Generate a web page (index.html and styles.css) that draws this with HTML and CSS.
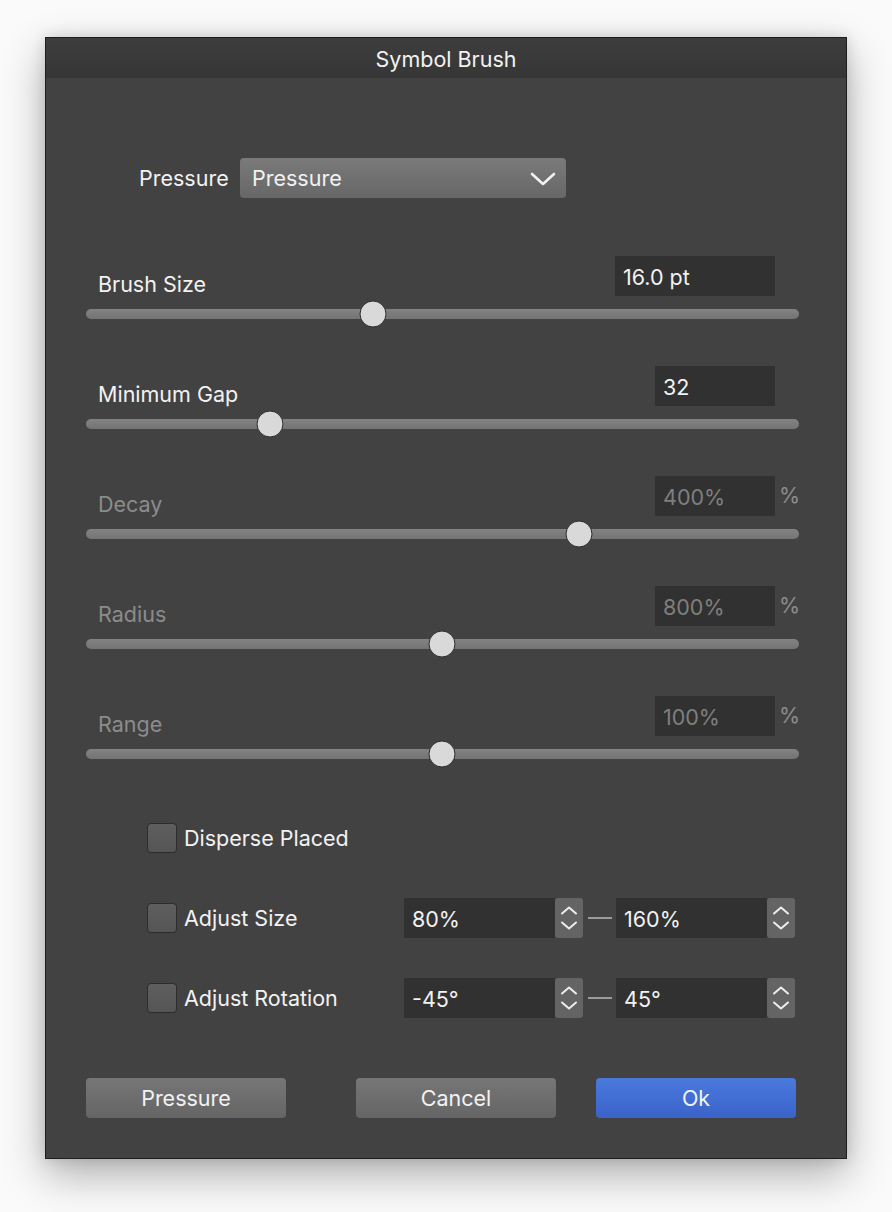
FILE: index.html
```html
<!DOCTYPE html>
<html lang="en">
<head>
    <meta charset="UTF-8">
    <title>Symbol Brush</title>
    <link rel="stylesheet" href="styles.css">
</head>
<body>
    <div class="dialog">
        <div class="titlebar">Symbol Brush</div>
        <div class="content">
            <div class="mode-row">
                <span class="mode-label">Pressure</span>
                <div class="select">
                    <span>Pressure</span>
                    <svg class="chevron" width="26" height="16" viewBox="0 0 26 16"><path d="M2 3 L13 13 L24 3" fill="none" stroke="#f2f2f2" stroke-width="2.6" stroke-linecap="round" stroke-linejoin="round"/></svg>
                </div>
            </div>

            <div class="slider-group">
                <div class="slider-head">
                    <span class="slider-label">Brush Size</span>
                    <div class="value-box wide">16.0 pt</div>
                    <span class="unit"></span>
                </div>
                <div class="track"><div class="knob" style="left: 40.3%"></div></div>
            </div>

            <div class="slider-group">
                <div class="slider-head">
                    <span class="slider-label">Minimum Gap</span>
                    <div class="value-box">32</div>
                    <span class="unit"></span>
                </div>
                <div class="track"><div class="knob" style="left: 25.8%"></div></div>
            </div>

            <div class="slider-group disabled">
                <div class="slider-head">
                    <span class="slider-label">Decay</span>
                    <div class="value-box">400%</div>
                    <span class="unit">%</span>
                </div>
                <div class="track"><div class="knob" style="left: 69.1%"></div></div>
            </div>

            <div class="slider-group disabled">
                <div class="slider-head">
                    <span class="slider-label">Radius</span>
                    <div class="value-box">800%</div>
                    <span class="unit">%</span>
                </div>
                <div class="track"><div class="knob" style="left: 49.9%"></div></div>
            </div>

            <div class="slider-group disabled">
                <div class="slider-head">
                    <span class="slider-label">Range</span>
                    <div class="value-box">100%</div>
                    <span class="unit">%</span>
                </div>
                <div class="track"><div class="knob" style="left: 49.9%"></div></div>
            </div>

            <div class="options">
                <div class="option-row">
                    <div class="checkbox"></div>
                    <span class="option-label">Disperse Placed</span>
                </div>
                <div class="option-row">
                    <div class="checkbox"></div>
                    <span class="option-label">Adjust Size</span>
                    <div class="field">80%</div>
                    <div class="stepper">
                        <svg width="18" height="26" viewBox="0 0 18 26"><path d="M2 8.5 L9 2.5 L16 8.5 M2 17.5 L9 23.5 L16 17.5" fill="none" stroke="#eeeeee" stroke-width="2" stroke-linecap="round" stroke-linejoin="round"/></svg>
                    </div>
                    <div class="dash"></div>
                    <div class="field">160%</div>
                    <div class="stepper">
                        <svg width="18" height="26" viewBox="0 0 18 26"><path d="M2 8.5 L9 2.5 L16 8.5 M2 17.5 L9 23.5 L16 17.5" fill="none" stroke="#eeeeee" stroke-width="2" stroke-linecap="round" stroke-linejoin="round"/></svg>
                    </div>
                </div>
                <div class="option-row">
                    <div class="checkbox"></div>
                    <span class="option-label">Adjust Rotation</span>
                    <div class="field">-45°</div>
                    <div class="stepper">
                        <svg width="18" height="26" viewBox="0 0 18 26"><path d="M2 8.5 L9 2.5 L16 8.5 M2 17.5 L9 23.5 L16 17.5" fill="none" stroke="#eeeeee" stroke-width="2" stroke-linecap="round" stroke-linejoin="round"/></svg>
                    </div>
                    <div class="dash"></div>
                    <div class="field">45°</div>
                    <div class="stepper">
                        <svg width="18" height="26" viewBox="0 0 18 26"><path d="M2 8.5 L9 2.5 L16 8.5 M2 17.5 L9 23.5 L16 17.5" fill="none" stroke="#eeeeee" stroke-width="2" stroke-linecap="round" stroke-linejoin="round"/></svg>
                    </div>
                </div>
            </div>

            <div class="buttons">
                <button class="btn">Pressure</button>
                <button class="btn cancel-btn">Cancel</button>
                <button class="btn ok-btn">Ok</button>
            </div>
        </div>
    </div>
</body>
</html>
```

FILE: styles.css
```css
html {
    background-color: #fafafa;
}
body {
    margin: 0;
    padding: 37px 0 54px 45px;
    font-family: Inter, "Open Sans", sans-serif;
    font-size: 21.5px;
    color: #f2f2f2;
}
.dialog {
    box-sizing: border-box;
    width: 802px;
    background-color: #424242;
    border: 1px solid #1e1e1e;
    box-shadow: 0 16px 40px rgba(0, 0, 0, 0.3), 0 0 14px rgba(0, 0, 0, 0.14);
}
.titlebar {
    height: 40px;
    line-height: 42px;
    text-align: center;
    background: linear-gradient(#3d3d3d, #363636);
}
.content {
    padding: 80px 47px 40px 40px;
}
.mode-row {
    display: flex;
    align-items: center;
    padding-left: 53px;
}
.mode-label {
    width: 101px;
}
.select {
    width: 326px;
    height: 40px;
    box-sizing: border-box;
    padding: 0 10px 0 12px;
    display: flex;
    align-items: center;
    justify-content: space-between;
    border-radius: 4px;
    background: linear-gradient(#7a7a7a, #676767);
}
.chevron {
    margin-top: 1px;
}
.slider-group {
    margin-top: 47px;
}
.mode-row + .slider-group {
    margin-top: 58px;
}
.slider-head {
    display: flex;
    align-items: flex-end;
    padding-left: 12px;
}
.slider-label {
    flex: 1;
    line-height: 24px;
}
.value-box {
    box-sizing: border-box;
    width: 120px;
    height: 40px;
    line-height: 42px;
    padding-left: 8px;
    background-color: #313131;
}
.value-box.wide {
    width: 160px;
}
.unit {
    width: 24px;
    box-sizing: border-box;
    padding-left: 4px;
    align-self: center;
    margin-top: -3px;
}
.disabled .slider-label,
.disabled .unit {
    color: #8c8c8c;
}
.disabled .value-box {
    color: #7f7f7f;
}
.track {
    position: relative;
    height: 10px;
    margin-top: 13px;
    border-radius: 5px;
    background: linear-gradient(#838383, #747474);
}
.knob {
    position: absolute;
    top: 50%;
    width: 27px;
    height: 27px;
    box-sizing: border-box;
    border-radius: 50%;
    border: 1px solid #2c2c2c;
    background-color: #d9d9d9;
    transform: translate(-50%, -50%);
}
.options {
    margin-top: 59px;
    padding-left: 61px;
}
.option-row {
    display: flex;
    align-items: center;
    height: 40px;
    margin-bottom: 40px;
}
.checkbox {
    width: 30px;
    height: 30px;
    box-sizing: border-box;
    border-radius: 4px;
    border: 1px solid #2d2d2d;
    background: linear-gradient(#5e5e5e, #555555);
}
.option-label {
    width: 220px;
    margin-left: 7px;
}
.field {
    box-sizing: border-box;
    width: 151px;
    height: 40px;
    line-height: 42px;
    padding-left: 8px;
    background-color: #313131;
}
.stepper {
    width: 28px;
    height: 40px;
    border-radius: 3px;
    background-color: #646464;
    display: flex;
    align-items: center;
    justify-content: center;
}
.dash {
    width: 24px;
    height: 2px;
    margin: 0 4px 0 5px;
    background-color: #9a9a9a;
}
.buttons {
    display: flex;
    margin-top: 60px;
}
.btn {
    width: 200px;
    height: 40px;
    border: none;
    border-radius: 4px;
    font-family: inherit;
    font-size: 21.5px;
    color: #f2f2f2;
    background: linear-gradient(#767676, #656565);
    padding: 0;
}
.cancel-btn {
    margin-left: 70px;
}
.ok-btn {
    margin-left: 40px;
    background: linear-gradient(#4a79dc, #3b63c9);
}
```
